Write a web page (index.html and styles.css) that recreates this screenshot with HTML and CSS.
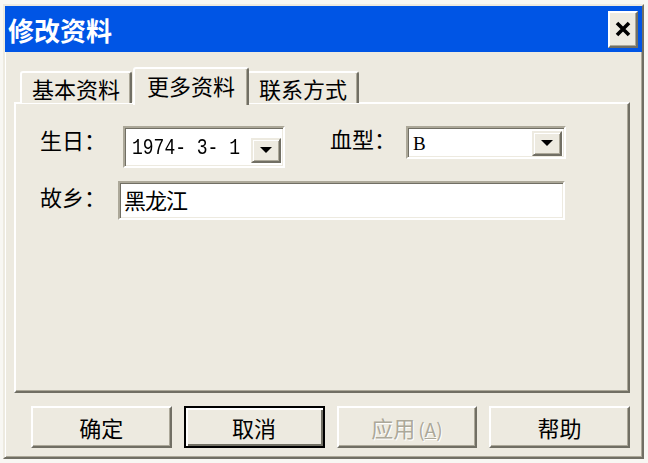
FILE: index.html
```html
<!DOCTYPE html>
<html lang="zh-cn">
<head>
    <meta charset="UTF-8">
    <title>修改资料</title>
    <link rel="stylesheet" href="styles.css">
</head>
<body>
    <div class="window">
        <div class="titlebar">
            <span class="title">修改资料</span>
            <button class="close-btn">
                <svg width="16" height="16" viewBox="0 0 16 16">
                    <path d="M2 2 L14 14 M14 2 L2 14" stroke="#000" stroke-width="3.6" fill="none"/>
                </svg>
            </button>
        </div>

        <div class="dialog-body">
            <div class="tabs">
                <div class="tab">基本资料</div>
                <div class="tab active">更多资料</div>
                <div class="tab">联系方式</div>
            </div>

            <div class="panel">
                <div class="row">
                    <span class="label">生日：</span>
                    <div class="combo combo-date">
                        <span class="value">1974- 3- 1</span>
                        <span class="drop">
                            <svg width="12" height="7" viewBox="0 0 12 7"><path d="M0 0 H12 L6 6 Z" fill="#000"/></svg>
                        </span>
                    </div>
                    <span class="label label-blood">血型：</span>
                    <div class="combo combo-blood">
                        <span class="value">B</span>
                        <span class="drop">
                            <svg width="12" height="7" viewBox="0 0 12 7"><path d="M0 0 H12 L6 6 Z" fill="#000"/></svg>
                        </span>
                    </div>
                </div>
                <div class="row">
                    <span class="label">故乡：</span>
                    <div class="textbox">黑龙江</div>
                </div>
            </div>

            <div class="buttons">
                <button class="btn">确定</button>
                <button class="btn btn-default">取消</button>
                <button class="btn btn-disabled">应用<span class="accel">(<u>A</u>)</span></button>
                <button class="btn">帮助</button>
            </div>
        </div>
    </div>
</body>
</html>
```

FILE: styles.css
```css
:root {
    --face: #edeae0;
    --light: #ffffff;
    --shadow: #aca899;
    --dark: #716f64;
    --title-blue: #0055e5;
    --cjk: "Noto Sans CJK SC", "Noto Sans", sans-serif;
}

* {
    margin: 0;
    padding: 0;
    box-sizing: border-box;
}

body {
    background: #f8f7f3;
    font-family: var(--cjk);
    font-size: 22px;
    color: #000;
}

.window {
    width: 641px;
    height: 455px;
    margin: 4px 0 0 3px;
    background: var(--face);
    border: 2px solid;
    border-color: var(--face) var(--dark) var(--dark) var(--face);
    box-shadow: inset 1px 1px var(--light), inset -1px -1px var(--shadow);
    display: flex;
    flex-direction: column;
}

.titlebar {
    height: 46px;
    background: var(--title-blue);
    display: flex;
    align-items: center;
    justify-content: space-between;
    padding: 0 4px 0 3px;
}

.title {
    color: #fff;
    font-size: 26px;
    font-weight: bold;
    letter-spacing: 0;
}

.close-btn {
    width: 30px;
    height: 37px;
    background: var(--face);
    border: 2px solid;
    border-color: var(--light) var(--dark) var(--dark) var(--light);
    box-shadow: inset -1px -1px var(--shadow);
    display: flex;
    align-items: center;
    justify-content: center;
}

.dialog-body {
    flex: 1;
    padding: 15px 12px 0 9px;
    display: flex;
    flex-direction: column;
}

.tabs {
    display: flex;
    align-items: flex-end;
    height: 36px;
    padding-left: 6px;
    position: relative;
    z-index: 1;
}

.tab {
    height: 32px;
    padding: 0 10px;
    line-height: 30px;
    border: 2px solid;
    border-bottom: none;
    border-color: var(--light) var(--dark) transparent var(--light);
    border-radius: 3px 3px 0 0;
    box-shadow: inset -1px 0 var(--shadow);
    background: var(--face);
}

.tab.active {
    height: 38px;
    padding: 0 12px;
    margin: 0 -2px -2px 1px;
    line-height: 32px;
    position: relative;
    z-index: 2;
}

.panel {
    height: 291px;
    border: 2px solid;
    border-color: var(--light) var(--dark) var(--dark) var(--light);
    box-shadow: inset -1px -1px var(--shadow);
    padding: 22px 0 0 24px;
    display: flex;
    flex-direction: column;
    gap: 15px;
    margin-top: -1px;
}

.row {
    display: flex;
    align-items: flex-start;
}

.label {
    width: 66px;
    line-height: 24px;
    padding-top: 1px;
}

.label-blood {
    margin-left: 45px;
    padding-top: 0;
}

.combo {
    background: #fff;
    border: 2px solid;
    border-color: var(--shadow) var(--light) var(--light) var(--shadow);
    box-shadow: inset 1px 1px var(--dark), inset -1px -1px var(--face);
    display: flex;
    align-items: flex-end;
    justify-content: space-between;
    padding: 0 2px 3px 7px;
    font-family: "Liberation Mono", monospace;
}

.combo-date {
    width: 162px;
    height: 42px;
    margin-left: 17px;
    font-size: 18px;
}

.combo-date .value {
    line-height: 24px;
    white-space: pre;
    transform: scaleY(1.25);
    transform-origin: bottom;
}

.combo-blood {
    width: 160px;
    height: 33px;
    margin-left: 10px;
    padding: 0 2px 1px 5px;
    font-family: "Liberation Serif", serif;
    font-size: 19px;
}

.combo-blood .value {
    line-height: 25px;
}

.drop {
    width: 30px;
    height: 25px;
    background: var(--face);
    border: 2px solid;
    border-color: var(--face) var(--dark) var(--dark) var(--face);
    box-shadow: inset 1px 1px var(--light), inset -1px -1px var(--shadow);
    display: flex;
    align-items: center;
    justify-content: center;
}

.textbox {
    width: 447px;
    height: 39px;
    margin-left: 12px;
    margin-top: -2px;
    background: #fff;
    border: 2px solid;
    border-color: var(--shadow) var(--light) var(--light) var(--shadow);
    box-shadow: inset 1px 1px var(--dark), inset -1px -1px var(--face);
    padding: 0 4px;
    line-height: 33px;
    letter-spacing: -1px;
}

.buttons {
    display: flex;
    gap: 12px;
    margin-top: 13px;
    padding-left: 17px;
}

.btn {
    width: 141px;
    height: 42px;
    background: var(--face);
    font-family: var(--cjk);
    font-size: 22px;
    color: #000;
    border: 2px solid;
    border-color: var(--light) var(--dark) var(--dark) var(--light);
    box-shadow: inset -1px -1px var(--shadow);
}

.btn-default {
    border: 2px solid #000;
    box-shadow: inset 2px 2px var(--light), inset -2px -2px var(--dark);
}

.btn-disabled {
    color: var(--shadow);
    text-shadow: 1px 1px var(--light);
}

.accel {
    font-size: 19px;
    margin-left: 3px;
}
```
